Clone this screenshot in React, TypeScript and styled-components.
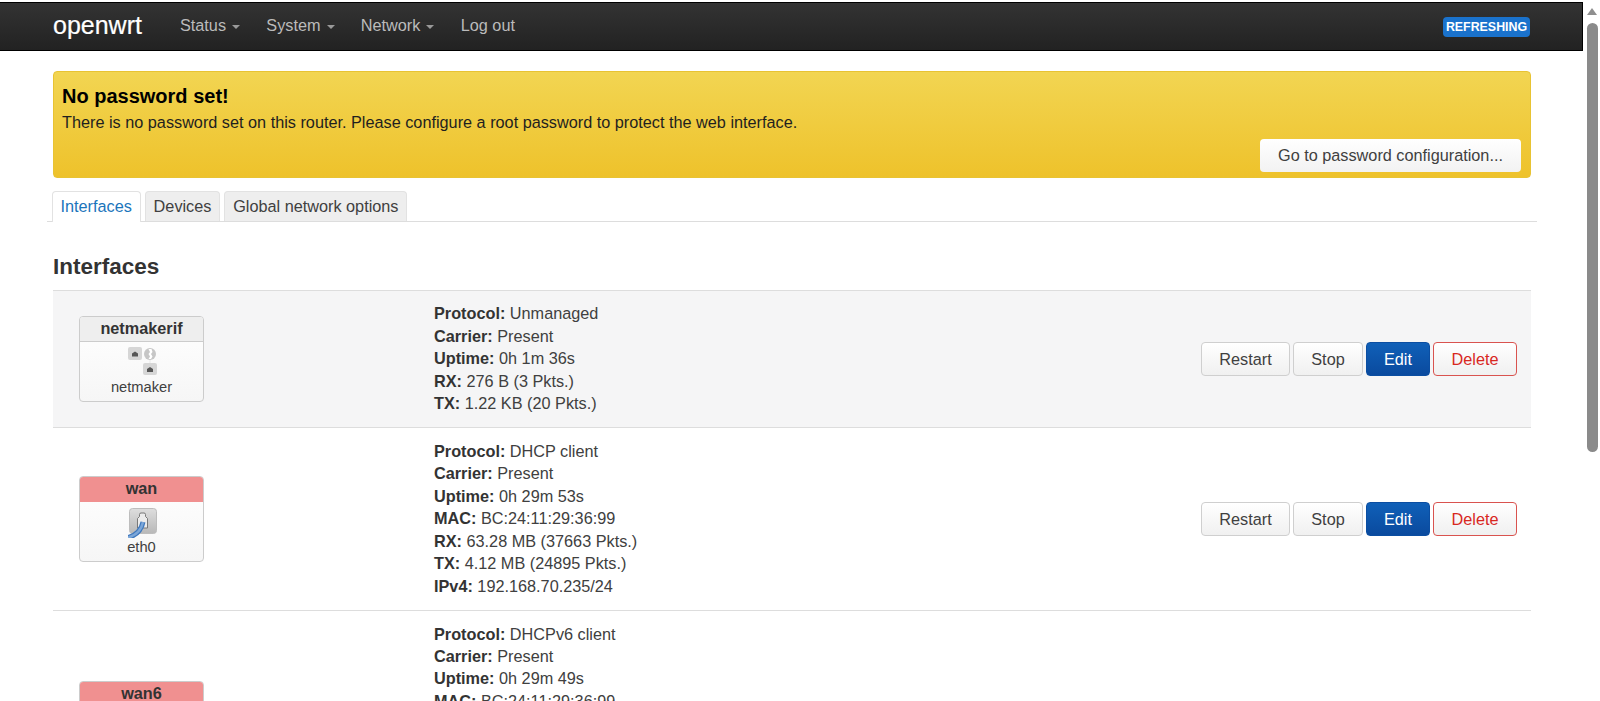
import styled, { createGlobalStyle } from "styled-components";

const GlobalStyle = createGlobalStyle`
  html, body {
    margin: 0;
    height: 100%;
    overflow: hidden;
    background: #fff;
  }
  body {
    font-family: "Liberation Sans", Arial, sans-serif;
    font-size: 16.25px;
    color: #404040;
  }
`;

type Stat = { label: string; value: string };

type Iface = {
  name: string;
  device: string;
  down?: boolean;
  virtual?: boolean;
  height: number;
  stats: Stat[];
};

const interfaces: Iface[] = [
  {
    name: "netmakerif",
    device: "netmaker",
    virtual: true,
    height: 137,
    stats: [
      { label: "Protocol:", value: "Unmanaged" },
      { label: "Carrier:", value: "Present" },
      { label: "Uptime:", value: "0h 1m 36s" },
      { label: "RX:", value: "276 B (3 Pkts.)" },
      { label: "TX:", value: "1.22 KB (20 Pkts.)" },
    ],
  },
  {
    name: "wan",
    device: "eth0",
    down: true,
    height: 183,
    stats: [
      { label: "Protocol:", value: "DHCP client" },
      { label: "Carrier:", value: "Present" },
      { label: "Uptime:", value: "0h 29m 53s" },
      { label: "MAC:", value: "BC:24:11:29:36:99" },
      { label: "RX:", value: "63.28 MB (37663 Pkts.)" },
      { label: "TX:", value: "4.12 MB (24895 Pkts.)" },
      { label: "IPv4:", value: "192.168.70.235/24" },
    ],
  },
  {
    name: "wan6",
    device: "eth0",
    down: true,
    height: 227,
    stats: [
      { label: "Protocol:", value: "DHCPv6 client" },
      { label: "Carrier:", value: "Present" },
      { label: "Uptime:", value: "0h 29m 49s" },
      { label: "MAC:", value: "BC:24:11:29:36:99" },
      { label: "RX:", value: "63.28 MB (37663 Pkts.)" },
      { label: "TX:", value: "4.12 MB (24895 Pkts.)" },
      { label: "IPv6:", value: "fe80::be24:11ff:fe29:3699/64" },
      { label: "IPv6-PD:", value: "fd00::/60" },
      { label: "Prefix:", value: "fd00::/64" },
    ],
  },
];

const TunnelIcon = () => (
  <svg width="29" height="28" viewBox="0 0 29 28">
    <rect x="0" y="0" width="14" height="13" rx="2" fill="#d6d6d6" />
    <path d="M4 9.500V6.500L7 4.500L10 6.500V9.500Z" fill="#565656" />
    <circle cx="22" cy="7" r="6" fill="#c6c6c6" />
    <path
      d="M20.500 2h3l1 3-1.500 2 1.500 2.500-1.500 2.500h-2.500l1.500-2.500-1.500-2.500 1.500-2Z"
      fill="#fff"
    />
    <path d="M22 13v3" stroke="#e8e8e8" strokeWidth="1" />
    <rect x="15" y="16" width="14" height="12" rx="2" fill="#d6d6d6" />
    <path d="M19 25V22L22 20L25 22V25Z" fill="#565656" />
  </svg>
);

const EthernetIcon = () => (
  <svg width="29" height="30" viewBox="0 0 29 30">
    <defs>
      <linearGradient id="plate" x1="0" y1="0" x2="0" y2="1">
        <stop offset="0" stopColor="#dedede" />
        <stop offset="1" stopColor="#b8b8b8" />
      </linearGradient>
    </defs>
    <rect x="1.500" y="0.500" width="27" height="25" rx="3" fill="url(#plate)" stroke="#bdbdbd" />
    <path
      d="M9.500 20V10.500L11.500 8.500V6.500Q11.500 5 13 5H16Q17.500 5 17.500 6.500V8.500L19.500 10.500V20Z"
      fill="#ececec"
      stroke="#787878"
      strokeWidth="1"
    />
    <path
      d="M0.500 29.500C7 27.500 13 24 15 14"
      fill="none"
      stroke="#3f78bd"
      strokeWidth="5"
    />
    <path
      d="M0.500 29.500C7 27.500 13 24 15 14"
      fill="none"
      stroke="#7ba6d8"
      strokeWidth="2.500"
    />
  </svg>
);

const App: React.FC = () => (
  <>
    <GlobalStyle />
    <Viewport>
      <Page>
        <Navbar>
          <Brand>openwrt</Brand>
          <Menu>
            <MenuItem>
              Status
              <Caret />
            </MenuItem>
            <MenuItem>
              System
              <Caret />
            </MenuItem>
            <MenuItem>
              Network
              <Caret />
            </MenuItem>
            <MenuItem>Log out</MenuItem>
          </Menu>
          <Refreshing>REFRESHING</Refreshing>
        </Navbar>
        <Content>
          <Alert>
            <AlertTitle>No password set!</AlertTitle>
            <AlertText>
              There is no password set on this router. Please configure a root
              password to protect the web interface.
            </AlertText>
            <AlertActions>
              <AlertButton>Go to password configuration...</AlertButton>
            </AlertActions>
          </Alert>
          <Tabs>
            <Tab $active>Interfaces</Tab>
            <Tab>Devices</Tab>
            <Tab>Global network options</Tab>
          </Tabs>
          <Heading>Interfaces</Heading>
          <Table>
            {interfaces.map((iface, index) => (
              <Row key={iface.name} $odd={index === 0} $height={iface.height}>
                <BadgeCell>
                  <Badge>
                    <BadgeTitle $down={iface.down}>{iface.name}</BadgeTitle>
                    <BadgeBody>
                      <BadgeIcon $gap={iface.virtual ? 4 : 1}>
                        {iface.virtual ? <TunnelIcon /> : <EthernetIcon />}
                      </BadgeIcon>
                      <span>{iface.device}</span>
                    </BadgeBody>
                  </Badge>
                </BadgeCell>
                <StatsCell>
                  {iface.stats.map((stat) => (
                    <StatLine key={stat.label}>
                      <strong>{stat.label}</strong> {stat.value}
                    </StatLine>
                  ))}
                </StatsCell>
                <Actions>
                  <Button>Restart</Button>
                  <Button $width={70}>Stop</Button>
                  <Button $kind="primary" $width={64}>
                    Edit
                  </Button>
                  <Button $kind="danger" $width={84}>
                    Delete
                  </Button>
                </Actions>
              </Row>
            ))}
          </Table>
        </Content>
      </Page>
      <Scrollbar>
        <ScrollArrow />
        <ScrollThumb />
      </Scrollbar>
    </Viewport>
  </>
);

export default App;

const Viewport = styled.div`
  display: flex;
  height: 701px;
  overflow: hidden;
  padding-top: 2px;
  box-sizing: border-box;
`;

const Page = styled.div`
  flex: 1;
  min-width: 0;
  overflow: hidden;
`;

const Navbar = styled.header`
  display: flex;
  align-items: center;
  height: 49px;
  padding: 0 52px 2px 53px;
  box-sizing: border-box;
  background: linear-gradient(#333333, #222222);
  border: 1px solid #000;
  border-left: 0;
`;

const Brand = styled.div`
  font-size: 25px;
  color: #fff;
  margin-right: 38px;
  -webkit-text-stroke: 0.2px #fff;
`;

const Menu = styled.nav`
  display: flex;
  gap: 26.300px;
  flex: 1;
`;

const MenuItem = styled.div`
  display: flex;
  align-items: center;
  gap: 6px;
  color: #bbbbbb;
`;

const Caret = styled.span`
  width: 0;
  height: 0;
  margin-top: 2px;
  border-left: 4.500px solid transparent;
  border-right: 4.500px solid transparent;
  border-top: 4px solid #999;
`;

const Refreshing = styled.div`
  padding: 3px 0;
  width: 87px;
  height: 20px;
  margin-top: 2px;
  box-sizing: border-box;
  border-radius: 4px;
  background: #1a72cc;
  color: #fff;
  font-size: 12.400px;
  line-height: 15px;
  font-weight: bold;
  text-align: center;
  white-space: nowrap;
`;

const Content = styled.main`
  padding: 20px 52px 0 53px;
`;

const Alert = styled.section`
  position: relative;
  height: 107px;
  box-sizing: border-box;
  padding: 13px 8px 0;
  border: 1px solid #e8c333;
  border-radius: 4px;
  background: linear-gradient(#f2d552, #eec22b);
  color: #1f1f1f;
`;

const AlertTitle = styled.h4`
  margin: 0;
  font-size: 20px;
  line-height: 22px;
  color: #000;
`;

const AlertText = styled.p`
  margin: 4px 0 0;
  line-height: 22px;
`;

const AlertActions = styled.div`
  position: absolute;
  right: 9px;
  bottom: 5px;
`;

const AlertButton = styled.button`
  width: 261px;
  height: 33px;
  padding: 0;
  border: 0;
  border-radius: 4px;
  background: linear-gradient(#ffffff, #f2f2f2);
  color: #404040;
  font: inherit;
`;

const Tabs = styled.div`
  display: flex;
  gap: 3.750px;
  margin: 13px -6px 0;
  padding-left: 4.500px;
  height: 31px;
  box-sizing: border-box;
  border-bottom: 1px solid #dddddd;
`;

const Tab = styled.div<{ $active?: boolean }>`
  height: ${({ $active }) => ($active ? 31 : 30)}px;
  box-sizing: border-box;
  padding: 0 8px;
  line-height: 29px;
  border: 1px solid #e2e2e2;
  border-bottom: 0;
  border-radius: 4px 4px 0 0;
  background: ${({ $active }) => ($active ? "#fff" : "#eeeeee")};
  color: ${({ $active }) => ($active ? "#1b75bb" : "#404040")};
`;

const Heading = styled.h3`
  margin: 32px 0 0;
  font-size: 22.500px;
  line-height: 26px;
  font-weight: bold;
  color: #333;
`;

const Table = styled.div`
  margin-top: 10px;
`;

const Row = styled.div<{ $odd?: boolean; $height: number }>`
  display: flex;
  align-items: center;
  height: ${({ $height }) => $height}px;
  box-sizing: border-box;
  padding-right: 14px;
  border-top: 1px solid #dddddd;
  background: ${({ $odd }) => ($odd ? "#f5f5f6" : "#fff")};
`;

const BadgeCell = styled.div`
  width: 381px;
  padding-left: 26px;
  box-sizing: border-box;
`;

const Badge = styled.div`
  width: 125px;
  height: 86px;
  box-sizing: border-box;
  display: flex;
  flex-direction: column;
  border: 1px solid #cccccc;
  border-radius: 4px;
  overflow: hidden;
  background: linear-gradient(#ffffff, #f6f6f6);
  text-align: center;
  font-size: 14.700px;
`;

const BadgeTitle = styled.div<{ $down?: boolean }>`
  height: 25px;
  line-height: 23px;
  box-sizing: border-box;
  font-size: 16.250px;
  font-weight: bold;
  color: #333;
  background: ${({ $down }) => ($down ? "#f09090" : "#eeeeee")};
  border-bottom: 1px solid ${({ $down }) => ($down ? "#f09090" : "#cccccc")};
`;

const BadgeBody = styled.div`
  flex: 1;
  display: flex;
  flex-direction: column;
  align-items: center;
  justify-content: flex-end;
  padding-bottom: 5px;
  line-height: 17px;
`;

const BadgeIcon = styled.div<{ $gap: number }>`
  display: flex;
  margin: 0 0 ${({ $gap }) => $gap}px 1px;
`;

const StatsCell = styled.div`
  flex: 1;
  padding-bottom: 1px;
`;

const StatLine = styled.div`
  line-height: 22.400px;
  color: #404040;

  strong {
    color: #333;
  }
`;

const Actions = styled.div`
  display: flex;
  gap: 3px;
`;

const Button = styled.button<{ $kind?: "primary" | "danger"; $width?: number }>`
  width: ${({ $width }) => $width ?? 89}px;
  height: 34px;
  padding: 0;
  border-radius: 4px;
  font: inherit;
  border: 1px solid
    ${({ $kind }) =>
      $kind === "primary" ? "#0b4ea2" : $kind === "danger" ? "#d9534f" : "#cfcfcf"};
  background: ${({ $kind }) =>
    $kind === "primary"
      ? "linear-gradient(#1060b8, #0a4a9e)"
      : "linear-gradient(#ffffff, #f0f0f0)"};
  color: ${({ $kind }) =>
    $kind === "primary" ? "#fff" : $kind === "danger" ? "#d8281f" : "#404040"};
`;

const Scrollbar = styled.div`
  width: 17px;
  flex: none;
  position: relative;
  background: #fff;
`;

const ScrollArrow = styled.div`
  position: absolute;
  top: 6px;
  left: 4px;
  width: 0;
  height: 0;
  border-left: 5.500px solid transparent;
  border-right: 5.500px solid transparent;
  border-bottom: 7px solid #8f8f8f;
`;

const ScrollThumb = styled.div`
  position: absolute;
  top: 21px;
  left: 4px;
  width: 11px;
  height: 429px;
  border-radius: 5.500px;
  background: #8a8a8a;
`;
